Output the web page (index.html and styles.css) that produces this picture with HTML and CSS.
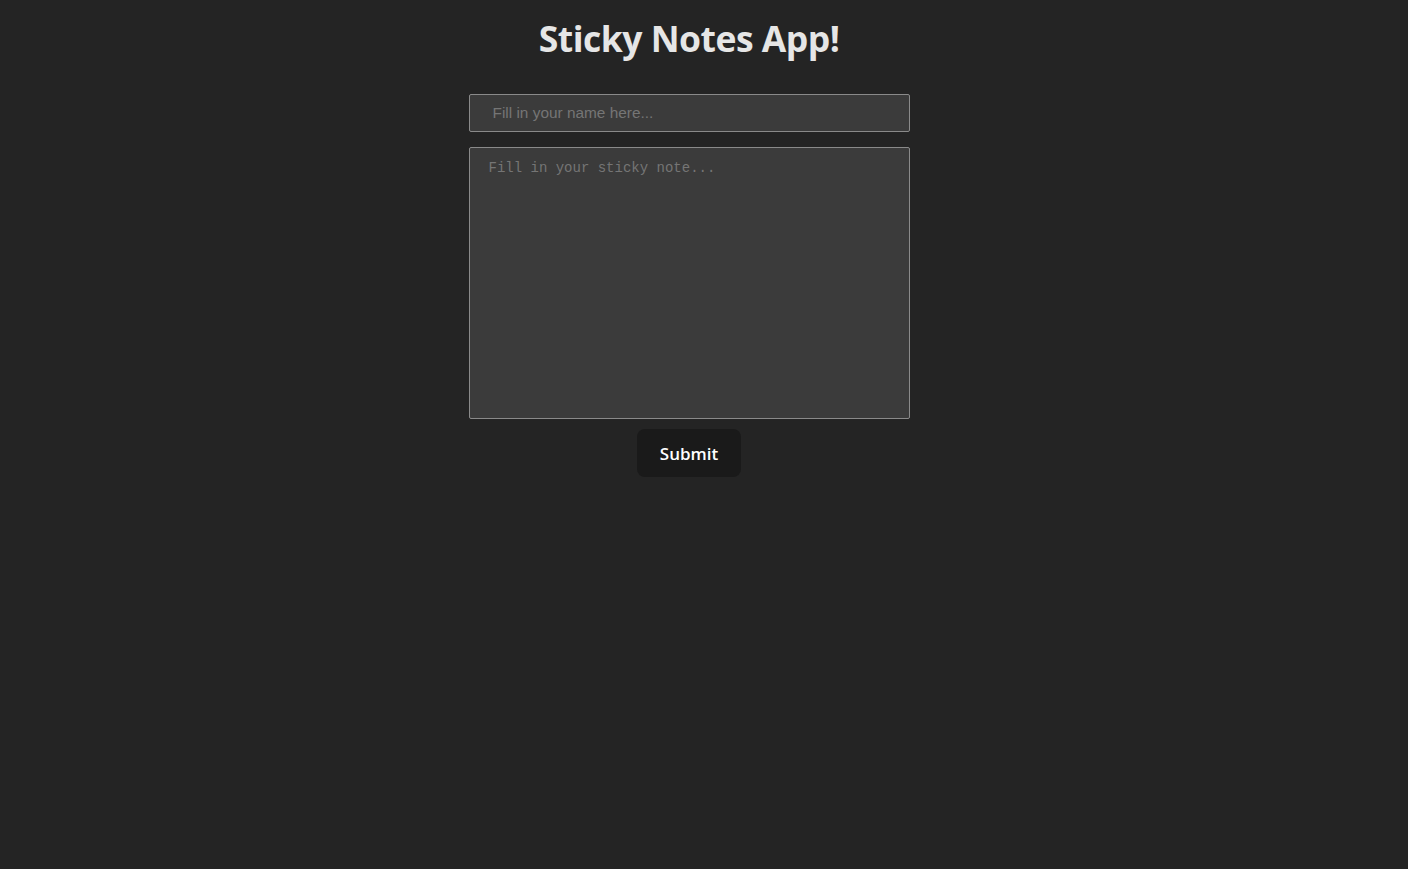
FILE: index.html
```html
<!DOCTYPE html>
<html>
<head>
<meta charset="utf-8">
<link rel="stylesheet" href="styles.css">
</head>
<body>
<div class="app">
  <h1 class="title">Sticky Notes App!</h1>
  <form class="form">
    <input class="name" type="text" placeholder="Fill in your name here...">
    <textarea class="note" placeholder="Fill in your sticky note..."></textarea>
    <button class="submit" type="button">Submit</button>
  </form>
</div>
</body>
</html>
```
FILE: styles.css
```css
html, body {
  margin: 0;
  padding: 0;
  background: #242424;
  height: 100%;
}
body {
  font-family: "Open Sans", "Noto Sans", sans-serif;
  color: rgba(255,255,255,0.87);
}
.app {
  display: flex;
  flex-direction: column;
  align-items: center;
  padding-top: 14px;
  padding-right: 30px;
}
.title {
  margin: 0;
  font-size: 35.5px;
  font-weight: 700;
  line-height: 48px;
  color: #e6e6e6;
  letter-spacing: -0.5px;
}
.form {
  margin-top: 32px;
  width: 441px;
  display: flex;
  flex-direction: column;
  align-items: center;
}
.name {
  box-sizing: border-box;
  width: 100%;
  height: 38px;
  background: #3b3b3b;
  border: 1px solid #8a8a8a;
  border-radius: 2px;
  padding: 0 23px;
  font-family: "Liberation Sans", Arial, sans-serif;
  font-size: 15.4px;
  color: #ddd;
  outline: none;
}
.name::placeholder { color: #757575; }
.note {
  box-sizing: border-box;
  width: 100%;
  height: 272px;
  margin-top: 15px;
  background: #3b3b3b;
  border: 1px solid #8a8a8a;
  border-radius: 2px;
  padding: 11px 19px;
  font-family: "Liberation Mono", "DejaVu Sans Mono", monospace;
  font-size: 14px;
  line-height: 18px;
  color: #ddd;
  resize: none;
  outline: none;
}
.note::placeholder { color: #757575; }
.submit {
  margin-top: 10px;
  width: 104px;
  height: 48px;
  background: #1a1a1a;
  border: none;
  border-radius: 8px;
  color: #fff;
  font-family: "Open Sans", "Noto Sans", sans-serif;
  font-size: 17px;
  font-weight: 600;
  cursor: pointer;
}
```
